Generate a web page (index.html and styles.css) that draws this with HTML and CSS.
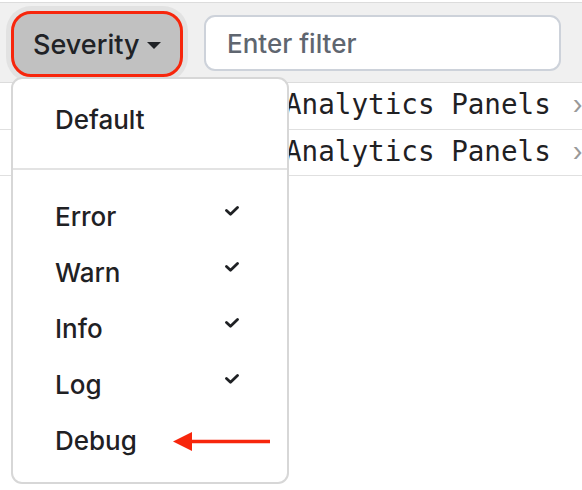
FILE: index.html
```html
<!DOCTYPE html>
<html>
<head>
<meta charset="utf-8">
<link rel="stylesheet" href="styles.css">
</head>
<body>
<div class="page">
  <div class="toolbar">
    <button class="severity">Severity<span class="caret"></span></button>
    <div class="filter">Enter filter</div>
  </div>
  <div class="rows">
    <div class="row"><span class="row-text">Analytics Panels</span><span class="chev">›</span></div>
    <div class="row"><span class="row-text">Analytics Panels</span><span class="chev">›</span></div>
  </div>

  <div class="menu">
    <div class="item item-default">Default</div>
    <div class="divider"></div>
    <div class="levels">
      <div class="item">Error<svg class="check" viewBox="0 0 14 10"><polyline points="1.5,4.5 5.5,8.2 12.5,1.5"/></svg></div>
      <div class="item">Warn<svg class="check" viewBox="0 0 14 10"><polyline points="1.5,4.5 5.5,8.2 12.5,1.5"/></svg></div>
      <div class="item">Info<svg class="check" viewBox="0 0 14 10"><polyline points="1.5,4.5 5.5,8.2 12.5,1.5"/></svg></div>
      <div class="item">Log<svg class="check" viewBox="0 0 14 10"><polyline points="1.5,4.5 5.5,8.2 12.5,1.5"/></svg></div>
      <div class="item">Debug</div>
    </div>
  </div>

  <svg class="arrow" viewBox="0 0 100 24" width="100" height="24">
    <line x1="18" y1="11.5" x2="98" y2="11.5"/>
    <polygon points="1,11.5 20,2 20,21"/>
  </svg>
</div>
</body>
</html>
```

FILE: styles.css
```css
html, body {
  margin: 0;
  padding: 0;
  background: #fff;
}
body {
  font-family: Inter, "Liberation Sans", sans-serif;
  color: #1f2124;
}
.page {
  position: relative;
  width: 582px;
  height: 490px;
  overflow: hidden;
}
.toolbar {
  margin-top: 2px;
  height: 79px;
  border-top: 1px solid #dcdcdc;
  border-bottom: 1px solid #dcdcdc;
  background: #f0f0f0;
  display: flex;
  align-items: flex-start;
  padding-left: 11px;
  box-sizing: content-box;
}
.severity {
  margin-top: 8px;
  width: 172px;
  height: 66px;
  border: 3px solid #f7260c;
  border-radius: 20px;
  background: #c1c1c1;
  box-shadow: 0 0 0 5px #e2e2e2;
  font-family: Inter, "Liberation Sans", sans-serif;
  font-size: 27px;
  font-weight: 500;
  color: #202226;
  display: flex;
  align-items: center;
  justify-content: flex-start;
  padding: 0 0 0 19px;
  box-sizing: border-box;
}
.caret {
  display: inline-block;
  width: 0;
  height: 0;
  border-left: 7px solid transparent;
  border-right: 7px solid transparent;
  border-top: 7px solid #202226;
  margin-left: 7px;
  margin-top: 2px;
}
.filter {
  margin-top: 12px;
  margin-left: 21px;
  width: 357px;
  height: 56px;
  box-sizing: border-box;
  border: 2px solid #cdd2da;
  border-radius: 11px;
  background: #fff;
  padding-left: 21px;
  display: flex;
  align-items: center;
  font-size: 26px;
  font-weight: 500;
  color: #5f6670;
}
.rows {
  display: flex;
  flex-direction: column;
}
.row {
  height: 46.5px;
  border-bottom: 1px solid #e0e0e0;
  display: flex;
  align-items: center;
  padding-bottom: 2px;
  box-sizing: border-box;
}
.row-text {
  font-family: "DejaVu Sans Mono", "Liberation Mono", monospace;
  font-size: 27.6px;
  color: #1f2124;
  margin-left: 285px;
  white-space: nowrap;
}
.chev {
  margin-left: 22px;
  font-size: 26px;
  color: #999;
}
.menu {
  position: absolute;
  left: 11px;
  top: 77px;
  width: 278px;
  height: 407px;
  box-sizing: border-box;
  border: 2px solid #d7d7d7;
  border-radius: 11px;
  background: #fff;
  padding-top: 12px;
}
.item {
  height: 56px;
  display: flex;
  align-items: center;
  justify-content: space-between;
  padding-left: 42px;
  padding-right: 48px;
  font-size: 26px;
  font-weight: 500;
  color: #1f2124;
}
.divider {
  margin-top: 21px;
  height: 2px;
  background: #e3e3e3;
}
.levels {
  padding-top: 18px;
}
.check {
  width: 14px;
  height: 10px;
  margin-bottom: 10px;
  fill: none;
  stroke: #1f2124;
  stroke-width: 2.8;
  stroke-linecap: round;
  stroke-linejoin: round;
}
.arrow {
  position: absolute;
  left: 172px;
  top: 430px;
}
.arrow line {
  stroke: #f7260c;
  stroke-width: 3.5;
}
.arrow polygon {
  fill: #f7260c;
}
```
